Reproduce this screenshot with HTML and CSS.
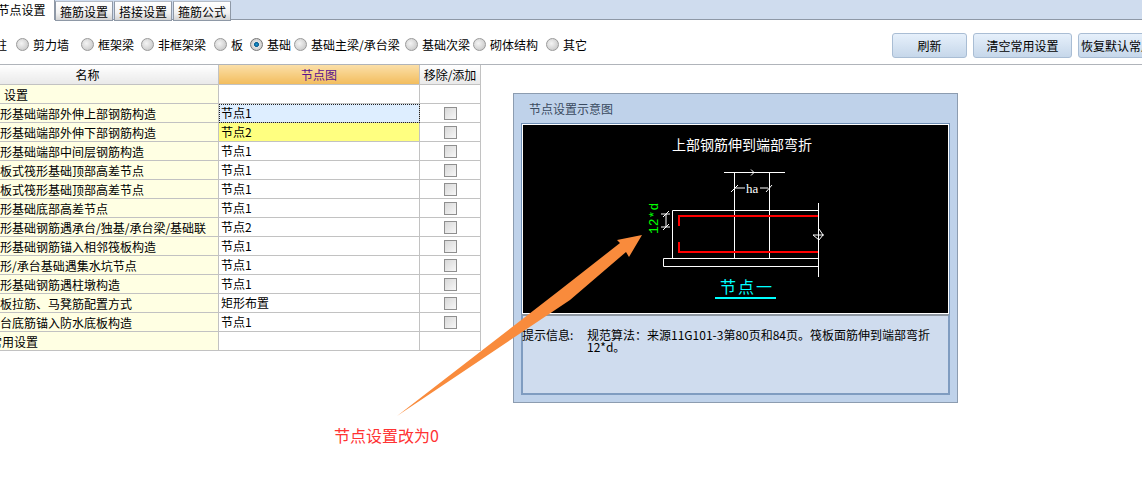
FILE: index.html
```html
<!DOCTYPE html>
<html lang="zh-CN">
<head>
    <meta charset="UTF-8">
    <title>节点设置</title>
    <link rel="stylesheet" href="styles.css">
</head>
<body>
    <div class="page">
        <div class="tab-bar">
            <div class="tab active">节点设置</div>
            <div class="tab">箍筋设置</div>
            <div class="tab">搭接设置</div>
            <div class="tab">箍筋公式</div>
        </div>

        <div class="toolbar">
            <div class="options">
                <label class="option opt-col"><span>柱</span></label>
                <label class="option opt-wall"><input type="radio" name="part"><span>剪力墙</span></label>
                <label class="option opt-frame"><input type="radio" name="part"><span>框架梁</span></label>
                <label class="option opt-beam"><input type="radio" name="part"><span>非框架梁</span></label>
                <label class="option opt-slab"><input type="radio" name="part"><span>板</span></label>
                <label class="option opt-base"><input type="radio" name="part" checked><span>基础</span></label>
                <label class="option opt-main"><input type="radio" name="part"><span>基础主梁/承台梁</span></label>
                <label class="option opt-sub"><input type="radio" name="part"><span>基础次梁</span></label>
                <label class="option opt-brick"><input type="radio" name="part"><span>砌体结构</span></label>
                <label class="option"><input type="radio" name="part"><span>其它</span></label>
            </div>
            <div class="buttons">
                <button class="btn-refresh">刷新</button>
                <button class="btn-clear">清空常用设置</button>
                <button class="btn-reset">恢复默认常用设置</button>
            </div>
        </div>

        <div class="main">
            <table class="node-table">
                <colgroup>
                    <col class="col-name">
                    <col class="col-node">
                    <col class="col-move">
                </colgroup>
                <thead>
                    <tr>
                        <th class="name-head">名称</th>
                        <th class="node-head">节点图</th>
                        <th>移除/添加</th>
                    </tr>
                </thead>
                <tbody>
                    <tr><td class="name group-first">设置</td><td></td><td></td></tr>
                    <tr><td class="name">筏形基础端部外伸上部钢筋构造</td><td class="selected">节点1</td><td class="check"><input type="checkbox"></td></tr>
                    <tr><td class="name">筏形基础端部外伸下部钢筋构造</td><td class="changed">节点2</td><td class="check"><input type="checkbox"></td></tr>
                    <tr><td class="name">筏形基础端部中间层钢筋构造</td><td>节点1</td><td class="check"><input type="checkbox"></td></tr>
                    <tr><td class="name">平板式筏形基础顶部高差节点</td><td>节点1</td><td class="check"><input type="checkbox"></td></tr>
                    <tr><td class="name">梁板式筏形基础顶部高差节点</td><td>节点1</td><td class="check"><input type="checkbox"></td></tr>
                    <tr><td class="name">筏形基础底部高差节点</td><td>节点1</td><td class="check"><input type="checkbox"></td></tr>
                    <tr><td class="name">筏形基础钢筋遇承台/独基/承台梁/基础联</td><td>节点2</td><td class="check"><input type="checkbox"></td></tr>
                    <tr><td class="name">筏形基础钢筋锚入相邻筏板构造</td><td>节点1</td><td class="check"><input type="checkbox"></td></tr>
                    <tr><td class="name">筏形/承台基础遇集水坑节点</td><td>节点1</td><td class="check"><input type="checkbox"></td></tr>
                    <tr><td class="name">筏形基础钢筋遇柱墩构造</td><td>节点1</td><td class="check"><input type="checkbox"></td></tr>
                    <tr><td class="name">筏板拉筋、马凳筋配置方式</td><td>矩形布置</td><td class="check"><input type="checkbox"></td></tr>
                    <tr><td class="name">承台底筋锚入防水底板构造</td><td>节点1</td><td class="check"><input type="checkbox"></td></tr>
                    <tr><td class="name group-last">常用设置</td><td></td><td></td></tr>
                </tbody>
            </table>

            <div class="panel">
                <div class="panel-title">节点设置示意图</div>
                <div class="picture">
                    <svg class="drawing" width="425" height="188" viewBox="523 125 425 188">
                        <text class="draw-title" x="672" y="150">上部钢筋伸到端部弯折</text>
                        <g class="white-lines">
                            <path d="M724 172.500H785M734.500 172.500V258M769.500 172.500V258"/>
                            <path d="M751 169.500L754 172.500L751 175.500"/>
                            <path d="M735 188H745M760 188H768M731 192L738 185M766 192L772 185"/>
                            <path d="M672.500 258V210.500H818.500M818.500 203V277"/>
                            <path d="M663.500 258.500H818.500V266.500H663.500Z"/>
                            <path d="M666 214V227M661 214H670M661 227H670M663 217L669 211M663 230L669 224"/>
                            <path d="M813 235H824M819 229L823 235L819 240L813 235"/>
                        </g>
                        <text class="draw-ha" x="746" y="193">ha</text>
                        <text class="draw-dim" transform="translate(658 234) rotate(-90)">12*d</text>
                        <g class="red-lines">
                            <path d="M679 226V216H818M679 242V252H818"/>
                        </g>
                        <text class="draw-name" x="720" y="293">节点一</text>
                        <rect class="draw-line" x="715" y="297" width="61" height="2"/>
                    </svg>
                </div>
                <div class="info">
                    <div class="info-label">提示信息:</div>
                    <div class="info-text">规范算法：来源11G101-3第80页和84页。筏板面筋伸到端部弯折<br>12*d。</div>
                </div>
            </div>
        </div>
    </div>

    <svg class="arrow" width="1142" height="488" viewBox="0 0 1142 488">
        <polygon points="397,416 560,290 620,243 617,240 642,235 629,257 626,252 570,300"/>
    </svg>
    <div class="note">节点设置改为0</div>
</body>
</html>
```

FILE: styles.css
```css
html, body {
    margin: 0;
    padding: 0;
    height: 488px;
    overflow: hidden;
    background: #fff;
}

body {
    position: relative;
    font-family: "Noto Sans CJK SC", "Liberation Sans", sans-serif;
    font-size: 12px;
    color: #000;
}

.page {
    width: 1200px;
    margin-left: -14px;
}

/* tabs */
.tab-bar {
    display: flex;
    height: 19px;
    padding-left: 10px;
    background: #cfdcee;
    border-bottom: 1px solid #8e98a6;
}

.tab {
    box-sizing: border-box;
    width: 58px;
    height: 20px;
    margin-right: 1px;
    margin-top: 1px;
    text-align: center;
    line-height: 19px;
    background: linear-gradient(#fff, #f2f2f2 60%, #d4d4d4);
    border: 1px solid #8e98a6;
    border-top-color: #b5bcc6;
}

.tab.active {
    width: 59px;
    margin-top: 0;
    margin-right: 0;
    padding-right: 7px;
    line-height: 20px;
    background: #fff;
    border: none;
    border-right: 1px solid #8e98a6;
}

/* radios and buttons */
.toolbar {
    display: flex;
    align-items: center;
    justify-content: space-between;
    box-sizing: border-box;
    height: 45px;
    padding-top: 4px;
    border-bottom: 1px solid #b0b4ba;
}

.options {
    display: flex;
    align-items: center;
    margin-left: 9px;
}

.option {
    display: flex;
    align-items: center;
    white-space: nowrap;
}

.option input {
    appearance: none;
    box-sizing: border-box;
    width: 13px;
    height: 13px;
    margin: 0 4px 0 0;
    border-radius: 50%;
    border: 1px solid #9a9a9a;
    background: radial-gradient(circle at 40% 40%, #f4f4f4, #cfcfcf 70%, #bbb);
}

.option input:checked {
    border-color: #777;
    background: radial-gradient(circle, #1b9ad6 0, #0a5f92 28%, #e4e4e4 34%, #bbb 100%);
}

.opt-col { width: 21px; }
.opt-wall { width: 65px; }
.opt-frame { width: 60px; }
.opt-beam { width: 73px; }
.opt-slab { width: 36px; }
.opt-base { width: 44px; }
.opt-main { width: 111px; }
.opt-sub { width: 68px; }
.opt-brick { width: 73px; }

.buttons {
    display: flex;
    gap: 6px;
    margin: 2px 6px 0 0;
}

.buttons button {
    box-sizing: border-box;
    height: 25px;
    padding: 0;
    font: inherit;
    color: #000;
    background: linear-gradient(#e6f0fb, #c6d7ea);
    border: 1px solid #a9bdd4;
    border-radius: 3px;
}

.btn-refresh { width: 75px; }
.btn-clear { width: 99px; }
.btn-reset { width: 102px; }

/* main area */
.main {
    display: flex;
    align-items: flex-start;
}

.node-table {
    border-collapse: collapse;
    table-layout: fixed;
    width: 494px;
    flex-shrink: 0;
}

.col-name { width: 232px; }
.col-node { width: 201px; }
.col-move { width: 61px; }

.node-table tr {
    height: 19px;
}

.node-table th,
.node-table td {
    padding: 1px 2px;
    border: 1px solid #c2c2c2;
    line-height: 16px;
    white-space: nowrap;
    overflow: hidden;
    vertical-align: top;
}

.node-table th {
    padding: 1px 2px 0;
    line-height: 18px;
    font-weight: normal;
    background: linear-gradient(#fff, #e9e9e9);
    border-top: none;
}

.node-table th.name-head {
    padding-right: 32px;
}

.node-table th.node-head {
    color: #5a128c;
    background: linear-gradient(#fbdfa8, #f2bd5e);
}

.node-table td.name {
    padding: 2px 2px 0 1px;
    background: #ffffe3;
    overflow: visible;
}

.node-table td.group-first { text-indent: 16px; }
.node-table td.group-last { text-indent: 2px; }

.node-table td.selected {
    background: #deeeff;
    outline: 1px dotted #222;
    outline-offset: -1px;
}

.node-table td.changed {
    background: #ffff80;
}

.node-table td.check {
    padding: 0;
    text-align: center;
}

.check input {
    appearance: none;
    display: block;
    box-sizing: border-box;
    width: 13px;
    height: 13px;
    margin: 3px auto 0;
    border: 1px solid #8f8f8f;
    background: linear-gradient(135deg, #d8d8d8, #f7f7f7);
}

/* picture panel */
.panel {
    box-sizing: border-box;
    flex-shrink: 0;
    width: 445px;
    height: 310px;
    margin: 28px 0 0 32px;
    padding: 0 7px;
    background: #bfd2ea;
    border: 1px solid #8c9cb0;
}

.panel-title {
    height: 29px;
    padding-left: 8px;
    line-height: 30px;
    color: #3a4a60;
}

.picture {
    box-sizing: border-box;
    height: 191px;
    padding: 1px 1px 0;
    background: #fff;
    border: 1px solid #6f8fb5;
    border-bottom: none;
}

.drawing {
    display: block;
    background: #000;
}

.draw-title {
    fill: #fff;
    font-size: 14px;
}

.white-lines path {
    fill: none;
    stroke: #fff;
    stroke-width: 1;
}

.red-lines path {
    fill: none;
    stroke: #f00;
    stroke-width: 2;
}

.draw-ha {
    fill: #fff;
    font-family: "Liberation Serif", serif;
    font-size: 13px;
}

.draw-dim {
    fill: #0f0;
    font-family: "Liberation Mono", monospace;
    font-size: 13px;
}

.draw-name {
    fill: #0ff;
    font-size: 16px;
    letter-spacing: 2px;
}

.draw-line {
    fill: #0ff;
}

.info {
    display: flex;
    box-sizing: border-box;
    height: 81px;
    padding-top: 13px;
    background: #cfdcee;
    border: 2px solid #7f9cc0;
    border-top: 2px solid #8f98a2;
    line-height: 12px;
}

.info-label {
    width: 65px;
    margin-left: -1px;
    flex-shrink: 0;
}

.info-text {
    white-space: nowrap;
}

/* annotation drawn over the page */
.arrow {
    position: absolute;
    left: 0;
    top: 0;
    pointer-events: none;
}

.arrow polygon {
    fill: #f98b3c;
}

.note {
    position: absolute;
    left: 334px;
    top: 425px;
    font-size: 16px;
    line-height: 20px;
    color: #f33;
}
```
